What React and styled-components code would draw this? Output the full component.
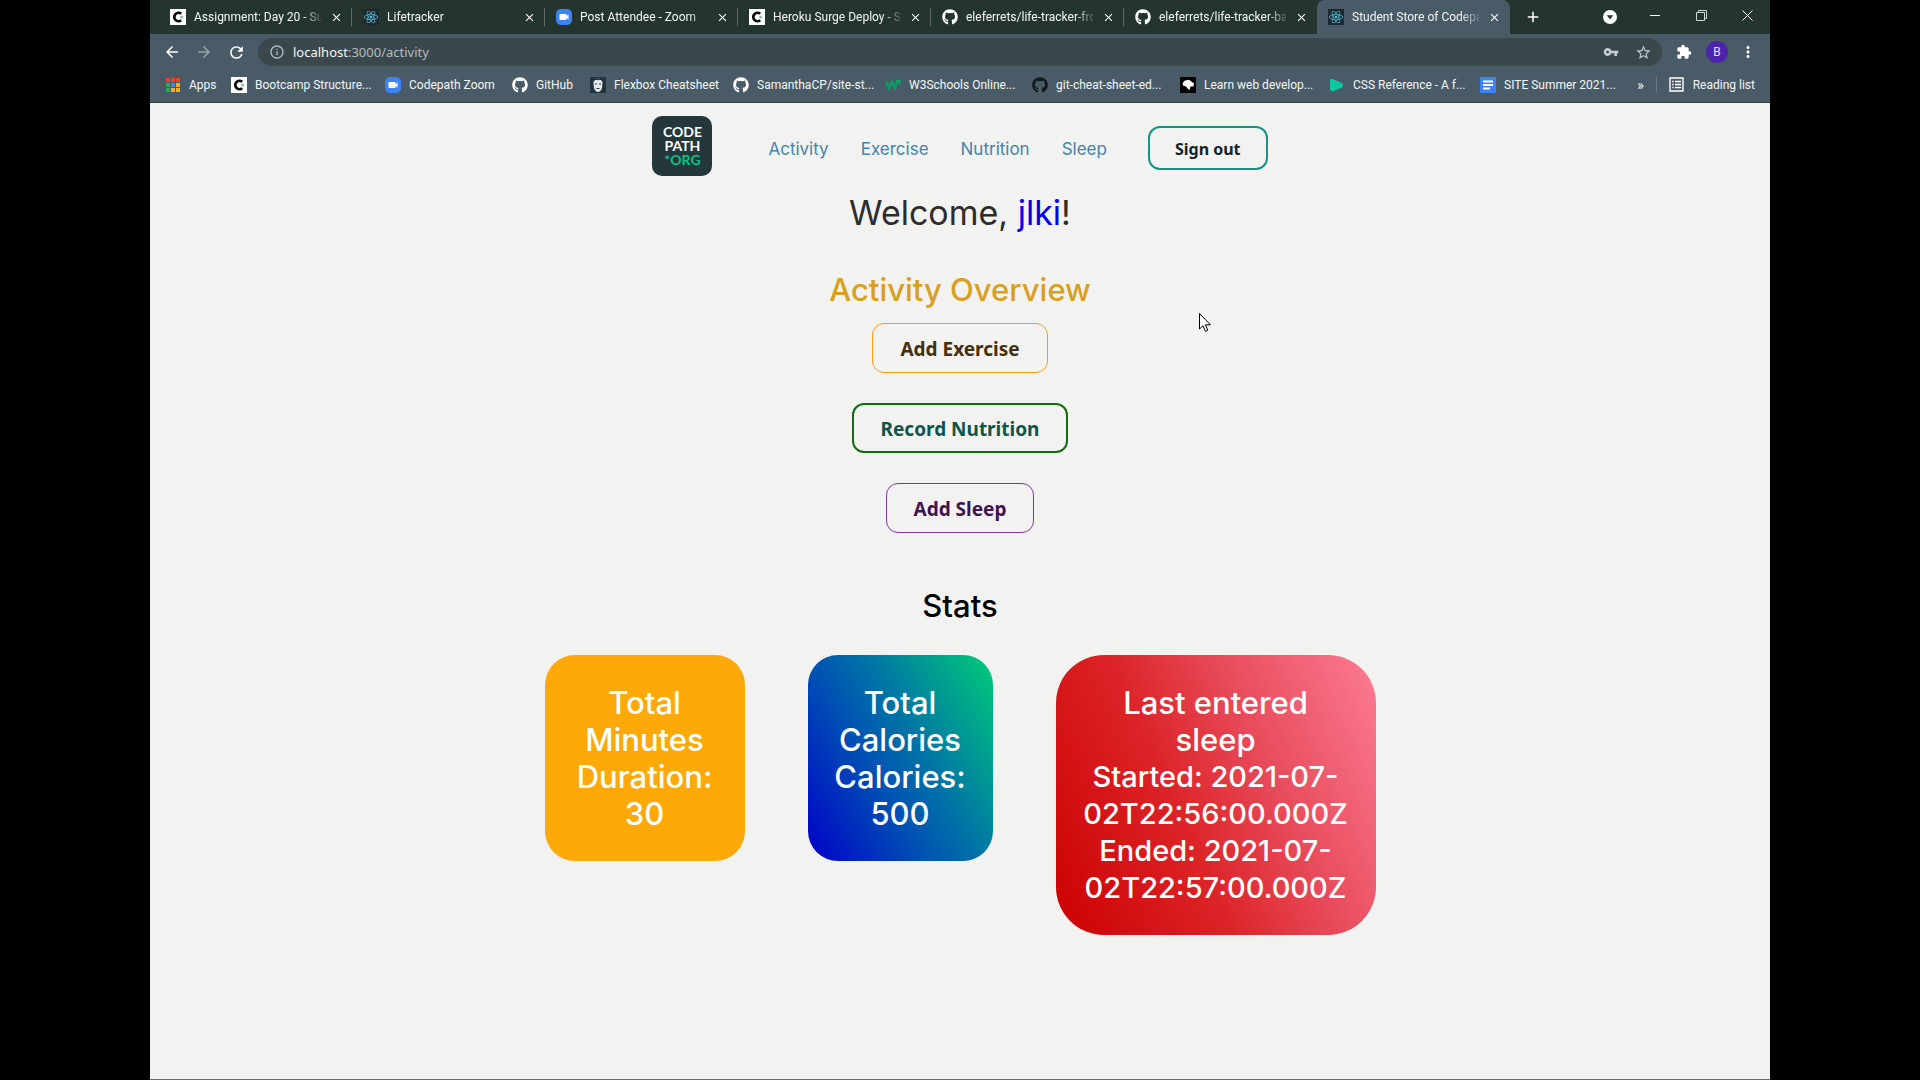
import React from 'react';
import styled, { createGlobalStyle, css } from 'styled-components';
import { FaGithub, FaReact } from 'react-icons/fa';
import {
  MdArrowBack, MdArrowForward, MdRefresh, MdInfoOutline, MdVpnKey, MdStarBorder,
  MdExtension, MdMoreVert, MdClose, MdAdd, MdVideocam,
} from 'react-icons/md';

const chromeFont = 'Roboto, "Open Sans", sans-serif';
const buttonFont = '"Noto Sans", "Open Sans", sans-serif';
const pageFont = 'Inter, "Open Sans", sans-serif';

const GlobalStyle = createGlobalStyle`
  *, *::before, *::after { box-sizing: border-box; }
  body { margin: 0; background: #000; font-family: ${pageFont}; }
  h1, h2, h3, p { margin: 0; font-weight: 500; }
  a { text-decoration: none; color: inherit; }
  button { font: inherit; color: inherit; background: none; border: 0; padding: 0; cursor: pointer; }
  svg { display: block; flex: none; }
`;

const Stage = styled.div`
  display: flex;
  justify-content: center;
  min-height: 100vh;
  background: #000;
`;

const Browser = styled.div`
  display: flex;
  flex-direction: column;
  width: min(100vw, 150vh);
  min-height: 100vh;
  background: #f2f2f0;
  border-bottom: 1px solid #6c6c70;
`;

const TabStrip = styled.div`
  display: flex;
  height: 34px;
  padding-left: 9px;
  background: #243530;
  color: #f4f6f4;
  font: 12px/16px ${chromeFont};
`;

const Tab = styled.div`
  flex: 0 1 193px;
  min-width: 0;
  display: flex;
  align-items: center;
  gap: 8px;
  padding: 0 9px 0 11px;
  position: relative;
  ${(p) => p.$active ? css`
    background: #4a5b68;
    border-radius: 8px 8px 0 0;
  ` : css`
    &::after {
      content: '';
      position: absolute;
      right: 0;
      top: 8px;
      height: 18px;
      border-right: 1px solid ${p.$last ? 'transparent' : '#5d6a67'};
    }
  `}
`;

const TabTitle = styled.span`
  flex: 1;
  min-width: 0;
  white-space: nowrap;
  mask-image: linear-gradient(to right, #000 85%, rgba(0, 0, 0, 0.2));
`;

const IconButton = styled.button`
  display: flex;
  align-items: center;
  justify-content: center;
  width: ${(p) => p.$w || 16}px;
  height: ${(p) => p.$h || 16}px;
  color: ${(p) => p.$color || '#fff'};
  flex: none;
`;

const WindowControls = styled.div`
  margin-left: auto;
  display: flex;
  align-items: flex-start;
`;

const Favicon = styled.span`
  display: flex;
  align-items: center;
  justify-content: center;
  flex: none;
  width: 16px;
  height: 16px;
  border-radius: ${(p) => p.$r || 0}px;
  background: ${(p) => p.$bg || 'transparent'};
  color: ${(p) => p.$color || '#fff'};
`;

const Toolbar = styled.div`
  display: flex;
  align-items: center;
  height: 34px;
  padding: 2px 12px 0;
  background: #4a5b68;
`;

const NavButtons = styled.div`
  display: flex;
  gap: 12px;
  margin-right: 12px;
`;

const AddressBar = styled.form`
  flex: 1;
  display: flex;
  align-items: center;
  gap: 8px;
  height: 28px;
  padding: 0 11px;
  border-radius: 14px;
  background: #3a474c;
  color: #b4bcc0;
  font: 13px/18px ${buttonFont};
`;

const AddressText = styled.span`
  flex: 1;
  b { font-weight: 400; color: #f6f8f8; }
`;

const AddressActions = styled.div`
  display: flex;
  gap: 16px;
`;

const ToolbarActions = styled.div`
  display: flex;
  align-items: center;
  gap: 10px;
  margin-left: 10px;
`;

const Avatar = styled.button`
  width: 22px;
  height: 22px;
  border-radius: 50%;
  background: #4c24ac;
  color: #e8e0f8;
  font: 12px/22px ${chromeFont};
`;

const Bookmarks = styled.nav`
  display: flex;
  align-items: center;
  height: 35px;
  padding: 0 15px 1px;
  background: #4a5b68;
  border-bottom: 1px solid #294034;
  color: #f4f6f4;
  font: 12px/16px ${chromeFont};
  white-space: nowrap;
`;

const Bookmark = styled.a`
  display: flex;
  align-items: center;
  gap: 8px;
  flex: 0 0 ${(p) => (p.$w ? `${p.$w}px` : 'auto')};
`;

const ReadingList = styled.button`
  display: flex;
  align-items: center;
  gap: 9px;
  margin-left: 12px;
  padding-left: 12px;
  border-left: 1px solid #6a7a84;
`;

const More = styled.button`
  margin-left: auto;
  font-size: 14px;
`;

const Page = styled.main`
  flex: 1;
  display: flex;
  flex-direction: column;
  align-items: center;
  padding-top: 13px;
`;

const Header = styled.header`
  display: flex;
  align-items: center;
`;

const Logo = styled.a`
  display: flex;
  flex-direction: column;
  align-items: center;
  justify-content: center;
  width: 60px;
  height: 60px;
  border-radius: 10px;
  background: #24383c;
  color: #fff;
  font: 700 14px/14px Lato, sans-serif;
  span { color: #0cc287; }
`;

const Links = styled.nav`
  display: flex;
  gap: 32px;
  margin: 6px 41px 0 56px;
  color: #4484ac;
  font-size: 17px;
  line-height: 20px;
`;

const OutlineButton = styled.button`
  min-height: 50px;
  padding: 2px 27px 0;
  border: ${(p) => p.$line || 1}px solid ${(p) => p.$border};
  border-radius: 12px;
  color: ${(p) => p.$color};
  font: 700 19px/24px ${buttonFont};
`;

const SignOut = styled(OutlineButton)`
  min-height: 44px;
  margin-top: 4px;
  padding: 2px 25px 0;
  font-size: 16px;
`;

const Welcome = styled.h1`
  margin-top: 17px;
  font-size: 34px;
  line-height: 40px;
  font-weight: 400;
  color: #2c2c2c;
  span { color: #0000f0; }
`;

const Title = styled.h2`
  margin-top: ${(p) => p.$top}px;
  font-size: 31px;
  line-height: 40px;
  color: ${(p) => p.$color};
`;

const Actions = styled.div`
  display: flex;
  flex-direction: column;
  align-items: center;
  gap: 30px;
  margin-top: 13px;
`;

const Stats = styled.section`
  display: flex;
  align-items: flex-start;
  justify-content: center;
  gap: 63px;
  margin-top: 29px;
`;

const Card = styled.article`
  width: ${(p) => p.$w}px;
  padding: 29px 26px;
  border-radius: ${(p) => p.$r}px;
  background: ${(p) => p.$bg};
  color: #fff;
  text-align: center;
  font-size: 31px;
  line-height: 37px;
  h3, p { font-size: inherit; }
`;

const Timestamp = styled.p`
  && { font-size: 29px; }
`;

const Pointer = styled.svg`
  position: absolute;
  left: 62.4vw;
  top: 312px;
`;

function CodepathMark() {
  return (
    <Favicon $bg="#fff">
      <svg width="16" height="16" viewBox="0 0 16 16" fill="none">
        <path d="M11.2 4.8A4.2 4.2 0 1 0 11.2 11.2" stroke="#0a0a0a" strokeWidth="2.8" />
        <circle cx="11.6" cy="8" r="1.5" fill="#7cc4a4" />
      </svg>
    </Favicon>
  );
}

function FaceMark() {
  return (
    <Favicon $bg="#20343c">
      <svg width="16" height="16" viewBox="0 0 16 16">
        <path d="M3.5 5Q4 1.5 8 1.5T12.5 5L12 11Q10.5 15 8 15T4 11Z" fill="#e4e8ea" />
        <path d="M3.5 5Q5 2 8 3.2Q11 2 12.5 5L12 1.5H4Z" fill="#1c2a34" />
        <path d="M5 7h2M9 7h2M6.5 11.5h3" stroke="#26343c" strokeWidth="1" />
      </svg>
    </Favicon>
  );
}

const appDots = ['#e8442c', '#e8442c', '#e8442c', '#2ca454', '#3c84f4', '#f4ac1c', '#2ca454', '#f4ac1c', '#f4ac1c'];

const icons = {
  codepath: <CodepathMark />,
  react: <Favicon $bg="#1e2a30" $color="#5cc4dc"><FaReact size={14} /></Favicon>,
  zoom: <Favicon $bg="#3c84f4" $r={5}><MdVideocam size={12} /></Favicon>,
  github: <Favicon><FaGithub size={16} /></Favicon>,
  githubDark: <Favicon $color="#14181c"><FaGithub size={16} /></Favicon>,
  face: <FaceMark />,
  apps: (
    <Favicon>
      <svg width="14" height="14" viewBox="0 0 14 14">
        {appDots.map((c, i) => (
          <rect key={i} x={(i % 3) * 5} y={Math.floor(i / 3) * 5} width="4" height="4" fill={c} />
        ))}
      </svg>
    </Favicon>
  ),
  w3: (
    <Favicon>
      <svg width="16" height="16" viewBox="0 0 16 16" fill="none" stroke="#0c9c64" strokeWidth="2.6">
        <path d="M1 4l3 7 3-6 3 6 2-7M11 4h4l-2 3" />
      </svg>
    </Favicon>
  ),
  mdn: (
    <Favicon $bg="#000">
      <svg width="16" height="16" viewBox="0 0 16 16">
        <path d="M2.5 6L5 3.5l4-.8L14 6.5l-.5 3H10.5L9.5 13l-2-1.5L6 9.5 3 8.5Z" fill="#fff" />
      </svg>
    </Favicon>
  ),
  cssref: (
    <Favicon>
      <svg width="16" height="16" viewBox="0 0 16 16">
        <path d="M1 3.5Q1.2 1.2 3.5 2L13 6Q15 8.5 13 10.5L5 14Q1.5 15 1 12Z" fill="#0cc8a0" />
      </svg>
    </Favicon>
  ),
  docs: (
    <Favicon $bg="#3c84f4" $r={1}>
      <svg width="16" height="16" viewBox="0 0 16 16" stroke="#fff" strokeWidth="1.8">
        <path d="M3 4.5h10M3 8h10M3 11.5h7" />
      </svg>
    </Favicon>
  ),
};

const tabs = [
  ['codepath', 'Assignment: Day 20 - Su'],
  ['react', 'Lifetracker'],
  ['zoom', 'Post Attendee - Zoom'],
  ['codepath', 'Heroku Surge Deploy - S'],
  ['github', 'eleferrets/life-tracker-fro'],
  ['github', 'eleferrets/life-tracker-ba'],
  ['react', 'Student Store of Codepa'],
];

const bookmarks = [
  ['apps', 'Apps', 66],
  ['codepath', 'Bootcamp Structure...', 154],
  ['zoom', 'Codepath Zoom', 127],
  ['github', 'GitHub', 78],
  ['face', 'Flexbox Cheatsheet', 143],
  ['github', 'SamanthaCP/site-st...', 152],
  ['w3', 'W3Schools Online...', 147],
  ['githubDark', 'git-cheat-sheet-ed...', 148],
  ['mdn', 'Learn web develop...', 149],
  ['cssref', 'CSS Reference - A f...', 151],
  ['docs', 'SITE Summer 2021...', 0],
];

const links = ['Activity', 'Exercise', 'Nutrition', 'Sleep'];

export default function App() {
  return (
    <Stage>
      <GlobalStyle />
      <Browser>
        <TabStrip>
          {tabs.map(([icon, title], i) => (
            <Tab key={title} $active={i === 6} $last={i === 5}>
              {icons[icon]}
              <TabTitle>{title}</TabTitle>
              <IconButton aria-label="Close tab" $w={14}><MdClose size={13} /></IconButton>
            </Tab>
          ))}
          <IconButton aria-label="New tab" $w={46} $h={34}><MdAdd size={18} /></IconButton>
          <WindowControls>
            <IconButton aria-label="Search tabs" $w={44} $h={34}>
              <svg width="14" height="14" viewBox="0 0 14 14">
                <circle cx="7" cy="7" r="7" fill="#fff" />
                <path d="M3.8 5.2h6.4L7 9.6Z" fill="#243530" />
              </svg>
            </IconButton>
            <IconButton aria-label="Minimize" $w={46} $h={30}>
              <svg width="10" height="10" viewBox="0 0 10 10"><path d="M0 5.5h10" stroke="#fff" /></svg>
            </IconButton>
            <IconButton aria-label="Restore" $w={46} $h={30}>
              <svg width="11" height="11" viewBox="0 0 11 11" fill="none" stroke="#d0d8d4">
                <path d="M.5 2.5h8v8h-8zM2.5 2.5v-2h8v8h-2" />
              </svg>
            </IconButton>
            <IconButton aria-label="Close window" $w={46} $h={30}>
              <svg width="11" height="11" viewBox="0 0 11 11" stroke="#fff"><path d="M.5.5l10 10M10.5.5l-10 10" /></svg>
            </IconButton>
          </WindowControls>
        </TabStrip>

        <Toolbar>
          <NavButtons>
            <IconButton aria-label="Back" $w={20} $h={20}><MdArrowBack size={18} /></IconButton>
            <IconButton aria-label="Forward" $w={20} $h={20} $color="#97a3aa"><MdArrowForward size={18} /></IconButton>
            <IconButton aria-label="Reload" $w={20} $h={20}><MdRefresh size={19} /></IconButton>
          </NavButtons>
          <AddressBar>
            <MdInfoOutline size={16} />
            <AddressText><b>localhost</b>:3000/activity</AddressText>
            <AddressActions>
              <IconButton type="button" aria-label="Passwords" $color="#c4ccd0"><MdVpnKey size={16} /></IconButton>
              <IconButton type="button" aria-label="Bookmark this page" $color="#c4ccd0"><MdStarBorder size={17} /></IconButton>
            </AddressActions>
          </AddressBar>
          <ToolbarActions>
            <IconButton aria-label="Extensions" $w={24}><MdExtension size={16} /></IconButton>
            <Avatar aria-label="Profile">B</Avatar>
            <IconButton aria-label="Menu" $w={20}><MdMoreVert size={18} /></IconButton>
          </ToolbarActions>
        </Toolbar>

        <Bookmarks aria-label="Bookmarks">
          {bookmarks.map(([icon, title, w]) => (
            <Bookmark key={title} href="#" $w={w}>{icons[icon]}{title}</Bookmark>
          ))}
          <More aria-label="More bookmarks">»</More>
          <ReadingList>
            <svg width="15" height="15" viewBox="0 0 15 15" fill="none" stroke="#fff" strokeWidth="1.4">
              <path d="M1 1h13v13H1zM3.2 4.5h1.5M6 4.5h6M3.2 7.5h1.5M6 7.5h6M3.2 10.5h1.5M6 10.5h6" />
            </svg>
            Reading list
          </ReadingList>
        </Bookmarks>

        <Page>
          <Header>
            <Logo href="#" aria-label="Codepath home">
              <div>CODE</div>
              <div>PATH</div>
              <span>*ORG</span>
            </Logo>
            <Links>
              {links.map((l) => <a key={l} href="#">{l}</a>)}
            </Links>
            <SignOut $line={2} $border="#149484" $color="#14242c">Sign out</SignOut>
          </Header>

          <Welcome>Welcome, <span>jlki</span>!</Welcome>

          <Title $top={37} $color="#d8a020">Activity Overview</Title>
          <Actions>
            <OutlineButton $border="#fc9c0c" $color="#44300c">Add Exercise</OutlineButton>
            <OutlineButton $line={2} $border="#146c14" $color="#10544c">Record Nutrition</OutlineButton>
            <OutlineButton $border="#8434a4" $color="#3c1450">Add Sleep</OutlineButton>
          </Actions>

          <Title $top={53} $color="#000">Stats</Title>
          <Stats>
            <Card $w={200} $r={30} $bg="#fea90a">
              <h3>Total Minutes</h3>
              <p>Duration: 30</p>
            </Card>
            <Card $w={185} $r={30} $bg="linear-gradient(60deg, #0000c8, #0050b4 38%, #0078a4 60%, #00c47c 96%)">
              <h3>Total Calories</h3>
              <p>Calories: 500</p>
            </Card>
            <Card $w={320} $r={48} $bg="linear-gradient(66deg, #cc0000, #dc2428 40%, #e84c5c 65%, #fc7c94)">
              <h3>Last entered sleep</h3>
              <Timestamp>Started: 2021-07-02T22:56:00.000Z</Timestamp>
              <Timestamp>Ended: 2021-07-02T22:57:00.000Z</Timestamp>
            </Card>
          </Stats>
        </Page>
      </Browser>
      <Pointer width="14" height="22" viewBox="0 0 14 22" aria-hidden="true">
        <path d="M1.5 1.5v15.5l3.5-3.3 2.4 5.6 2.4-1-2.4-5.5h5Z" fill="#fff" stroke="#000" />
      </Pointer>
    </Stage>
  );
}
